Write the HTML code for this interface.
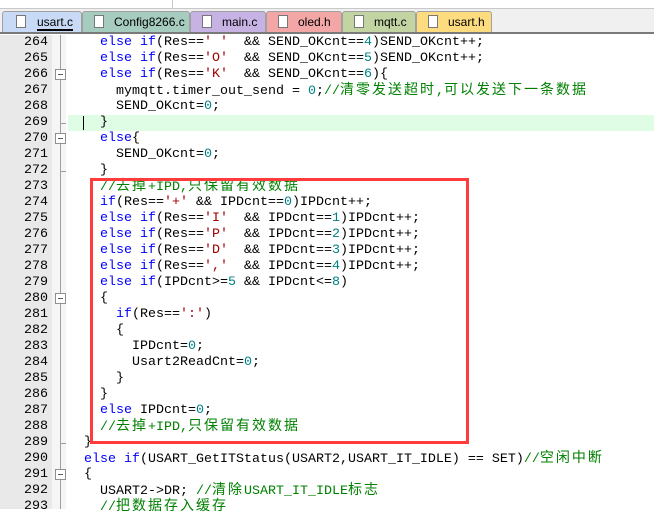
<!DOCTYPE html>
<html><head><meta charset="utf-8"><style>
*{margin:0;padding:0;box-sizing:border-box}
body{width:654px;height:509px;overflow:hidden;background:#fff;position:relative;font-family:"Liberation Mono","Noto Sans CJK SC",monospace}
.top{position:absolute;left:0;top:0;width:654px;height:9px;background:#fff;border-bottom:1px solid #c8c8c8}
.tabbar{position:absolute;left:0;top:9px;width:654px;height:25px;background:#f0f0f0;border-bottom:2px solid #7a7a7a}
.tab{position:absolute;top:2px;height:21px;border:1px solid #a0a0a0;border-bottom:none;border-radius:3px 3px 0 0;font:12px "Liberation Sans",sans-serif;line-height:20px;padding-left:31px;color:#000;white-space:nowrap;overflow:hidden}
.tab i{position:absolute;left:11px;top:3px;width:10px;height:13px;background:#fff;border:1px solid #777}
.gut{position:absolute;left:0;top:35px;width:52px;height:474px;background:#e9e9e9}
.fold{position:absolute;left:52px;top:35px;width:14px;height:474px;background:#f5f5f5}
.vl{position:absolute;left:60px;top:35px;width:1px;height:474px;background:#a0a0a0}
.fb{position:absolute;left:55px;width:11px;height:11px;border:1px solid #909090;background:#fff}
.fb:after{content:"";position:absolute;left:2px;top:4px;width:5px;height:1px;background:#606060}
.tk{position:absolute;left:60px;width:6px;height:1px;background:#a0a0a0}
.ln{position:absolute;left:0;width:48px;text-align:right;font-size:13.33px;line-height:16px;color:#000}
.c{position:absolute;left:68px;white-space:pre;font-size:13.33px;line-height:16px;color:#000}
.k{color:#0000ff}.s{color:#a00000}.n{color:#008080}.m{color:#008000}
.z{letter-spacing:2px;font-size:14px}
.red{position:absolute;left:90px;top:178px;width:379px;height:266px;border:3px solid #ff3b3b}
</style></head><body>
<div class="top"></div>
<div style="position:absolute;left:172px;top:0;width:1px;height:9px;background:#c8c8c8"></div>
<div class="tabbar">
<div class="tab" style="left:2px;width:80px;background:#c8daf5;padding-left:34px"><i style="left:13px"></i><span style="border-bottom:2px solid #000">usart.c</span></div>
<div class="tab" style="left:82px;width:108px;background:#a6cbbf"><i></i>Config8266.c</div>
<div class="tab" style="left:190px;width:76px;background:#c7b3e3"><i></i>main.c</div>
<div class="tab" style="left:266px;width:76px;background:#f2a6a6"><i></i>oled.h</div>
<div class="tab" style="left:342px;width:74px;background:#c3d4a3"><i></i>mqtt.c</div>
<div class="tab" style="left:416px;width:76px;background:#fddc80"><i></i>usart.h</div>
</div>
<div class="gut"></div><div class="fold"></div><div class="vl"></div>
<div style="position:absolute;left:68px;top:115px;width:586px;height:16px;background:#dffce5"></div>
<div style="position:absolute;left:83px;top:116px;width:1px;height:14px;background:#000"></div>
<div class="fb" style="top:69px"></div><div class="fb" style="top:133px"></div><div class="fb" style="top:293px"></div><div class="fb" style="top:469px"></div>
<div class="tk" style="top:123px"></div><div class="tk" style="top:171px"></div><div class="tk" style="top:443px"></div>
<div class="ln" style="top:35px">264</div><div class="c" style="top:35px">    <span class="k">else if</span>(Res==<span class="s">' '</span>  &amp;&amp; SEND_OKcnt==<span class="n">4</span>)SEND_OKcnt++;</div>
<div class="ln" style="top:51px">265</div><div class="c" style="top:51px">    <span class="k">else if</span>(Res==<span class="s">'O'</span>  &amp;&amp; SEND_OKcnt==<span class="n">5</span>)SEND_OKcnt++;</div>
<div class="ln" style="top:67px">266</div><div class="c" style="top:67px">    <span class="k">else if</span>(Res==<span class="s">'K'</span>  &amp;&amp; SEND_OKcnt==<span class="n">6</span>){</div>
<div class="ln" style="top:83px">267</div><div class="c" style="top:83px">      mymqtt.timer_out_send = <span class="n">0</span>;<span class="m">//<span class="z">清零发送超时</span>,<span class="z">可以发送下一条数据</span></span></div>
<div class="ln" style="top:99px">268</div><div class="c" style="top:99px">      SEND_OKcnt=<span class="n">0</span>;</div>
<div class="ln" style="top:115px">269</div><div class="c" style="top:115px">    }</div>
<div class="ln" style="top:131px">270</div><div class="c" style="top:131px">    <span class="k">else</span>{</div>
<div class="ln" style="top:147px">271</div><div class="c" style="top:147px">      SEND_OKcnt=<span class="n">0</span>;</div>
<div class="ln" style="top:163px">272</div><div class="c" style="top:163px">    }</div>
<div class="ln" style="top:179px">273</div><div class="c" style="top:179px">    <span class="m">//<span class="z">去掉</span>+IPD,<span class="z">只保留有效数据</span></span></div>
<div class="ln" style="top:195px">274</div><div class="c" style="top:195px">    <span class="k">if</span>(Res==<span class="s">'+'</span> &amp;&amp; IPDcnt==<span class="n">0</span>)IPDcnt++;</div>
<div class="ln" style="top:211px">275</div><div class="c" style="top:211px">    <span class="k">else if</span>(Res==<span class="s">'I'</span>  &amp;&amp; IPDcnt==<span class="n">1</span>)IPDcnt++;</div>
<div class="ln" style="top:227px">276</div><div class="c" style="top:227px">    <span class="k">else if</span>(Res==<span class="s">'P'</span>  &amp;&amp; IPDcnt==<span class="n">2</span>)IPDcnt++;</div>
<div class="ln" style="top:243px">277</div><div class="c" style="top:243px">    <span class="k">else if</span>(Res==<span class="s">'D'</span>  &amp;&amp; IPDcnt==<span class="n">3</span>)IPDcnt++;</div>
<div class="ln" style="top:259px">278</div><div class="c" style="top:259px">    <span class="k">else if</span>(Res==<span class="s">','</span>  &amp;&amp; IPDcnt==<span class="n">4</span>)IPDcnt++;</div>
<div class="ln" style="top:275px">279</div><div class="c" style="top:275px">    <span class="k">else if</span>(IPDcnt&gt;=<span class="n">5</span> &amp;&amp; IPDcnt&lt;=<span class="n">8</span>)</div>
<div class="ln" style="top:291px">280</div><div class="c" style="top:291px">    {</div>
<div class="ln" style="top:307px">281</div><div class="c" style="top:307px">      <span class="k">if</span>(Res==<span class="s">':'</span>)</div>
<div class="ln" style="top:323px">282</div><div class="c" style="top:323px">      {</div>
<div class="ln" style="top:339px">283</div><div class="c" style="top:339px">        IPDcnt=<span class="n">0</span>;</div>
<div class="ln" style="top:355px">284</div><div class="c" style="top:355px">        Usart2ReadCnt=<span class="n">0</span>;</div>
<div class="ln" style="top:371px">285</div><div class="c" style="top:371px">      }</div>
<div class="ln" style="top:387px">286</div><div class="c" style="top:387px">    }</div>
<div class="ln" style="top:403px">287</div><div class="c" style="top:403px">    <span class="k">else</span> IPDcnt=<span class="n">0</span>;</div>
<div class="ln" style="top:419px">288</div><div class="c" style="top:419px">    <span class="m">//<span class="z">去掉</span>+IPD,<span class="z">只保留有效数据</span></span></div>
<div class="ln" style="top:435px">289</div><div class="c" style="top:435px">  }</div>
<div class="ln" style="top:451px">290</div><div class="c" style="top:451px">  <span class="k">else if</span>(USART_GetITStatus(USART2,USART_IT_IDLE) == SET)<span class="m">//<span class="z">空闲中断</span></span></div>
<div class="ln" style="top:467px">291</div><div class="c" style="top:467px">  {</div>
<div class="ln" style="top:483px">292</div><div class="c" style="top:483px">    USART2-&gt;DR; <span class="m">//<span class="z">清除</span>USART_IT_IDLE<span class="z">标志</span></span></div>
<div class="ln" style="top:499px">293</div><div class="c" style="top:499px">    <span class="m">//<span class="z">把数据存入缓存</span></span></div>
<div class="red"></div>
</body></html>
